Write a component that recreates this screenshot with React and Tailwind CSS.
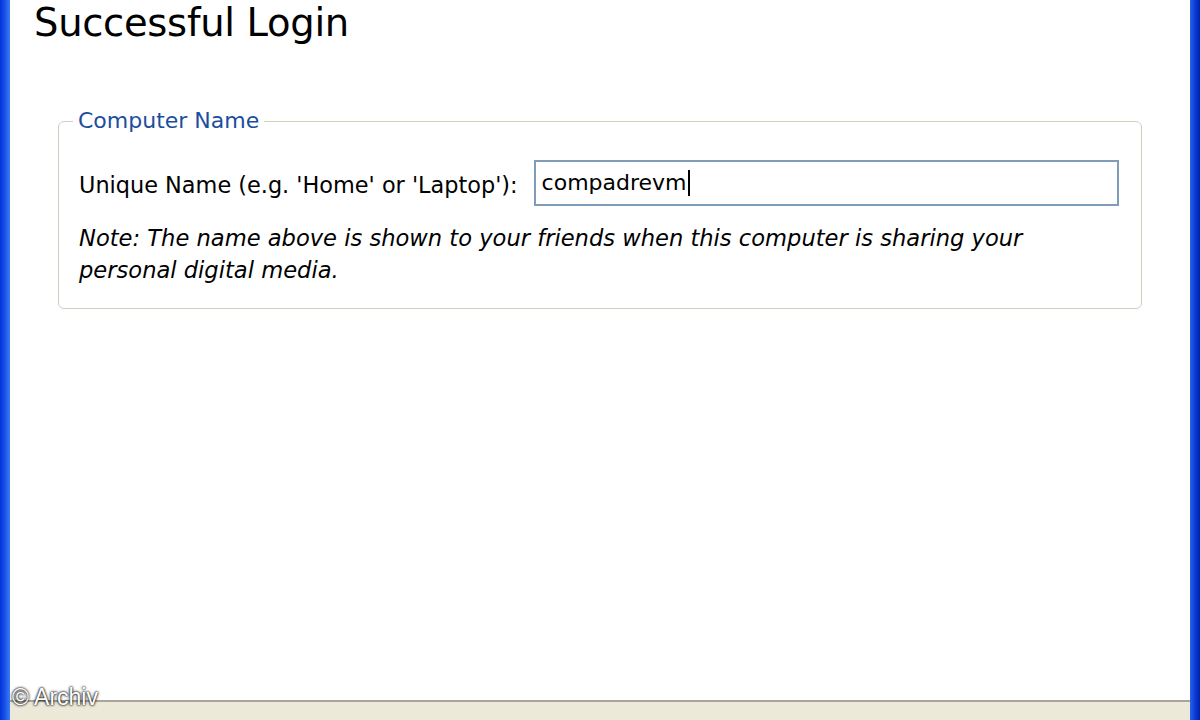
export default function App() {
  return (
    <div className="w-[1200px] h-[720px] flex bg-white overflow-hidden font-['DejaVu_Sans',sans-serif]">
      {/* left window frame */}
      <div className="w-[10px] h-full bg-gradient-to-r from-[#0831d9] via-[#1653e8] to-[#3d7bf5]" />

      <div className="flex-1 flex flex-col">
        <div className="flex-1 flex flex-col bg-white">
          <h1 className="pl-[24px] text-[38.5px] leading-[46px] text-black tracking-[-0.3px]">
            Successful Login
          </h1>

          {/* group box */}
          <div className="ml-[48px] mr-[48px] mt-[75px] relative border border-[#d0d0bf] rounded-[6px] h-[188px] pl-[20px] pr-[22px]">
            <span className="absolute -top-[16px] left-[14px] bg-white px-[5px] text-[22px] leading-[30px] text-[#1c4e9e]">
              Computer Name
            </span>
            <div className="flex items-center gap-[16px] mt-[38px]">
              <label className="pt-[5px] text-[22.4px] text-black whitespace-nowrap">
                Unique Name (e.g. 'Home' or 'Laptop'):
              </label>
              <div className="flex-1 h-[46px] border-2 border-[#7f9db9] flex items-center pl-[6px]">
                <span className="text-[22px] text-black leading-none">compadrevm</span>
                <span className="w-[2px] h-[26px] bg-black ml-[1px]" />
              </div>
            </div>
            <p className="mt-[16px] text-[22.6px] leading-[32px] italic text-black">
              Note: The name above is shown to your friends when this computer is sharing your
              <br />
              personal digital media.
            </p>
          </div>
          <div className="flex-1" />
        </div>

        {/* bottom bar */}
        <div className="relative h-[20px] border-t-2 border-[#a8a69c] bg-[#ece9d8]">
          <span className="absolute left-[2px] -top-[16px] text-[23px] leading-none text-white font-['Liberation_Sans',sans-serif] [text-shadow:0_0_3px_#000,0_0_2px_#000]">
            © Archiv
          </span>
        </div>
      </div>

      {/* right window frame */}
      <div className="w-[10px] h-full bg-gradient-to-r from-[#2a62e8] via-[#0a3bd6] to-[#0021a8]" />
    </div>
  );
}
